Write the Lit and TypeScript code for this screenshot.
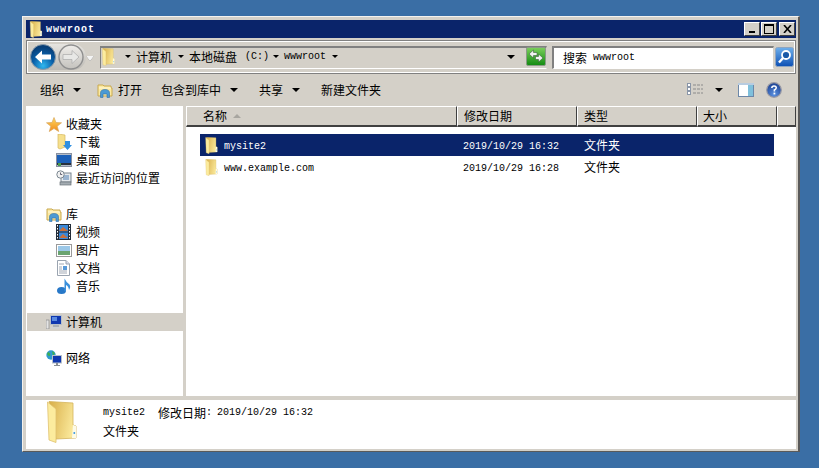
import { LitElement, html, css, svg } from "lit";
import { customElement } from "lit/decorators.js";

const folder = (w: number, h: number, id: string) => html`<svg class="ic" width=${w} height=${h} viewBox="0 0 30 42">
  <defs><linearGradient id=${id} x1="0" x2="1" y1="0" y2="0.3"><stop offset="0" stop-color="#d8ae48"/><stop offset="1" stop-color="#fae89a"/></linearGradient></defs>
  <path d="M2 0.5 L26 2 V24 L29 25 V37 L9 38 Z" fill=${`url(#${id})`} stroke="#d4b45c" stroke-width=".8"/>
  <path d="M26 24 L29 25 V37 L25 37 Z" fill="#fdfbe8"/><rect x="26.5" y="31" width="1.6" height="2" fill="#4aa0e0"/>
  <path d="M0.5 1 L9 8 V41.5 L2 39 Z" fill="#fcec9e" stroke="#dfc270" stroke-width=".8"/>
</svg>`;

const libFolder = () => html`<svg class="ic" width="16" height="15" viewBox="0 0 16 15">
  <path d="M1 2 H6 L7 3 H14 V5 H15 V13 H1 Z" fill="#fbe9a2" stroke="#c9a94e"/>
  <path d="M2 5 H14" stroke="#fff8d8"/>
  <path d="M3.5 14.5 V10 Q3.5 6.5 8 6.5 Q12.5 6.5 12.5 10 V14.5 H10 V11 H6 V14.5 Z" fill="#4b9ad4" stroke="#2f6fa8" stroke-width=".6"/>
</svg>`;

const arrow = (cls = "") => html`<span class="tri ${cls}"></span>`;

@customElement("app-root")
export class AppRoot extends LitElement {
  static styles = css`
    :host { display: block; width: 819px; height: 468px; background: #3a6ea5; box-sizing: border-box; padding: 16px 19px 16px 22px; overflow: hidden;
      font: 12px/18px "Noto Sans CJK SC", "Liberation Sans", sans-serif; color: #000; }
    .m { font-family: "Liberation Mono", monospace; font-size: 10px; }
    .ic { display: block; flex: none; }
    .win { width: 778px; height: 436px; box-sizing: border-box; background: #d4d0c8; border-top: 1px solid #f4f2ee; border-left: 1px solid #f4f2ee; border-right: 2px solid #5a5a5a; border-bottom: 1px solid #5a5a5a; padding: 3px 2px 2px 3px; display: flex; flex-direction: column; }
    .title { height: 18px; flex: none; background: #0a246a; color: #fff; display: flex; align-items: center; padding: 0 1px 0 3px; }
    .title .t { margin-left: 3px; padding-top: 2px; font: bold 10px/16px "Liberation Mono", monospace; letter-spacing: 1px; }
    .sp { flex: 1; }
    .wb { width: 16px; height: 14px; box-sizing: border-box; background: #d4d0c8; border: 1px solid; border-color: #fff #404040 #404040 #fff; display: flex; align-items: center; justify-content: center; margin-left: 1px; }
    .wb.x { margin-left: 2px; }
    .nav { margin-top: 2px; height: 34px; flex: none; box-sizing: border-box; border: 1px solid #808080; box-shadow: 0 0 0 1px #fff inset; display: flex; align-items: center; padding: 0 1px 0 3px; }
    .orb { width: 56px; height: 26px; flex: none; border-radius: 13px; background: linear-gradient(#e6e4e0, #bdbab4); display: flex; align-items: center; position: relative; }
    .drop { width: 0; height: 0; margin: 2px 8px 0 0; flex: none; border-left: 4px solid transparent; border-right: 4px solid transparent; border-top: 5px solid #f4f4f4; filter: drop-shadow(0 0 .6px #555); }
    .addr { width: 447px; height: 23px; flex: none; box-sizing: border-box; border: 1px solid; border-color: #808080 #d4d0c8 #fff #808080; border-top-width: 2px; padding-bottom: 2px; display: flex; align-items: center; margin-left: -2px; }
    .addr > * { flex: none; }
    .addr .fo { margin: 0 9px 0 0; }
    .tri { display: inline-block; width: 0; height: 0; border-left: 3px solid transparent; border-right: 3px solid transparent; border-top: 3px solid #000; flex: none; }
    .tri.big { border-left-width: 4px; border-right-width: 4px; border-top-width: 4px; }
    .a1 { margin-right: 5px; }
    .a2 { margin: 0 5px 0 6px; }
    .a3 { margin: 0 5px 0 4px; }
    .cd { margin-left: 8px; }
    .addr .big { margin-left: auto; margin-right: 11px; }
    .search { width: 222px; height: 23px; flex: none; box-sizing: border-box; margin-left: 5px; background: #fff; border: 1px solid; border-color: #808080 #d4d0c8 #fff #808080; border-top-width: 2px; border-left-width: 2px; display: flex; align-items: center; padding-left: 9px; gap: 6px; }
    .sbtn { margin-left: 1px; }
    .bar { height: 32px; flex: none; display: flex; align-items: center; padding-left: 14px; }
    .bar > * { flex: none; }
    .bar .tri { margin-left: 9px; }
    .g1 { margin-left: 16px; }
    .g2 { margin-left: 5px; }
    .g3 { margin-left: 19px; }
    .g4 { margin-left: 21px; }
    .g5 { margin-left: 21px; }
    .right { margin-left: auto; display: flex; align-items: center; padding-right: 14px; }
    .right > * { flex: none; }
    .bar .right .tri { margin: 0 15px 0 12px; }
    .hlp { margin-left: 12px; }
    .main { flex: 1; display: flex; min-height: 0; }
    .side { width: 157px; flex: none; background: #fff; padding-top: 9px; box-sizing: border-box; }
    .side .gr { margin-bottom: 18px; }
    .row { height: 18px; display: flex; align-items: center; padding-left: 20px; gap: 5px; }
    .row .box { width: 15px; display: flex; justify-content: center; flex: none; }
    .row.c { padding-left: 30px; }
    .row.sel { background: #d4d0c8; margin-left: 1px; padding-left: 19px; }
    .content { margin-left: 3px; flex: 1; background: #fff; display: flex; flex-direction: column; min-width: 0; }
    .head { height: 21px; flex: none; display: flex; box-sizing: border-box; }
    .hc { box-sizing: border-box; background: #d4d0c8; border: 1px solid; border-color: #fff #404040 #404040 #fff; border-bottom-width: 2px; line-height: 18px; padding-left: 16px; display: flex; align-items: center; }
    .hc.n { width: 271px; }
    .hc.d, .hc.ty { width: 120px; padding-left: 6px; }
    .hc.s { width: 80px; padding-left: 5px; }
    .hc.e { flex: 1; padding: 0; }
    .sort { width: 0; height: 0; margin-left: 6px; border-left: 4px solid transparent; border-right: 4px solid transparent; border-bottom: 4px solid #a8a6a0; }
    .list { padding: 7px 0 0 14px; }
    .fr { width: 574px; height: 22px; display: flex; align-items: center; }
    .fr.on { background: #0a246a; color: #fff; }
    .fr .fi { margin-left: 5px; }
    .fr .m { padding-top: 3px; }
    .fr .nm { width: 239px; margin-left: 6px; }
    .fr .dt { width: 121px; }
    .status { margin-top: 4px; height: 49px; flex: none; background: #fff; display: flex; align-items: flex-start; padding-left: 21px; }
    .status .fo { margin-top: 1px; }
    .status .tx { margin-left: 26px; padding-top: 4px; }
    .status .l { height: 18px; display: flex; align-items: center; }
    .mod { margin-left: 13px; }
    .dv { margin-left: 5px; }
  `;

  render() {
    return html`<div class="win">
      <div class="title">
        ${folder(14, 17, "g1")}
        <span class="t">wwwroot</span><span class="sp"></span>
        <span class="wb"><svg width="8" height="8"><rect x="1" y="6" width="6" height="2" fill="#000"/></svg></span>
        <span class="wb"><svg width="10" height="10"><rect x=".5" y="1" width="9" height="8.5" fill="none" stroke="#000"/><rect x="0" y="0" width="10" height="2" fill="#000"/></svg></span>
        <span class="wb x"><svg width="9" height="8"><path d="M1 0 L8 8 M8 0 L1 8" stroke="#000" stroke-width="1.6"/></svg></span>
      </div>
      <div class="nav">
        <div class="orb">
          <svg width="56" height="26" viewBox="0 0 56 26">
            <defs>
              <radialGradient id="bl" cx=".5" cy=".85" r=".75"><stop offset="0" stop-color="#2fb8f0"/><stop offset=".55" stop-color="#0a5fa8"/><stop offset="1" stop-color="#083f78"/></radialGradient>
              <linearGradient id="gr" x1="0" x2="0" y1="0" y2="1"><stop offset="0" stop-color="#efedea"/><stop offset="1" stop-color="#c4c2bd"/></linearGradient>
            </defs>
            <circle cx="13" cy="13" r="12.5" fill="url(#bl)" stroke="#8a9aa8"/>
            <path d="M5 13 L12 6.5 V10.5 H21 V15.5 H12 V19.5 Z" fill="#fff"/>
            <circle cx="41" cy="13" r="12" fill="url(#gr)" stroke="#8f8f8f" stroke-width="1.4"/>
            <path d="M49 13 L42 6.5 V10.5 H33 V15.5 H42 V19.5 Z" fill="#e8e8e6" stroke="#aaa" stroke-width=".7"/>
          </svg>
        </div>
        <span class="drop"></span>
        <div class="addr">
          <span class="fo">${folder(15, 18, "g2")}</span>
          ${arrow("a1")}<span>计算机</span>${arrow("a2")}<span>本地磁盘</span><span class="m cd">(C:)</span>${arrow("a3")}<span class="m">wwwroot</span>${arrow("a2")}
          ${arrow("big")}
          <svg class="ic" width="20" height="19" viewBox="0 0 20 19">
            <defs><linearGradient id="rf" x1="0" x2="0" y1="0" y2="1"><stop offset="0" stop-color="#7cd05c"/><stop offset="1" stop-color="#128a10"/></linearGradient></defs>
            <rect x=".5" y=".5" width="19" height="18" rx="1.5" fill="url(#rf)" stroke="#8a9a86"/>
            <path d="M3 7 L7.5 3 V5.5 H11 V8.5 H7.5 V11 Z M17 11 L12.5 15 V12.5 H9.5 V9.5 H12.5 V7 Z" fill="#f2f2f2" stroke="#2a4a2a" stroke-width=".5"/>
          </svg>
        </div>
        <div class="search"><span>搜索</span><span class="m">wwwroot</span></div>
        <svg class="ic sbtn" width="19" height="20" viewBox="0 0 19 20">
          <defs><linearGradient id="sb" x1="0" x2="0" y1="0" y2="1"><stop offset="0" stop-color="#6fb0ec"/><stop offset="1" stop-color="#0c4fb4"/></linearGradient></defs>
          <rect x=".5" y=".5" width="18" height="19" rx="2" fill="url(#sb)" stroke="#8fa5c0"/>
          <circle cx="11" cy="8" r="4" fill="#1a5aa8" stroke="#fff" stroke-width="1.8"/>
          <path d="M8 11 L4 15.5" stroke="#fff" stroke-width="2.4"/>
        </svg>
      </div>
      <div class="bar">
        <span>组织</span>${arrow("big")}
        <span class="g1">${libFolder()}</span><span class="g2">打开</span>
        <span class="g3">包含到库中</span>${arrow("big")}
        <span class="g4">共享</span>${arrow("big")}
        <span class="g5">新建文件夹</span>
        <div class="right">
          <svg class="ic" width="16" height="14" viewBox="0 0 16 14">
            ${[1, 5, 9].map((y) => svg`<rect x=".5" y=${y - 0.5} width="3" height="3" fill="#fff" stroke="#8a96a8"/><path d=${`M6 ${y + 1} H16`} stroke="#8a8a8a" stroke-dasharray="3 1"/>`)}
          </svg>
          ${arrow("big")}
          <svg class="ic" width="16" height="14" viewBox="0 0 16 14">
            <rect x=".5" y=".5" width="15" height="13" fill="#fff" stroke="#6c87a8"/><rect x="10" y="1" width="5" height="12" fill="#7fc0dc"/><rect x="0" y="0" width="16" height="2" fill="#b8cce0"/>
          </svg>
          <svg class="ic hlp" width="16" height="16" viewBox="0 0 16 16">
            <defs><radialGradient id="hp" cx=".5" cy=".8" r=".8"><stop offset="0" stop-color="#5a90e0"/><stop offset="1" stop-color="#1a3f90"/></radialGradient></defs>
            <circle cx="8" cy="8" r="7.3" fill="url(#hp)" stroke="#9a9aa4" stroke-width="1.2"/>
            <path d="M5.8 6 Q6 4 8 4 Q10.4 4 10.2 6 Q10 7.4 8.4 8 V9.5" fill="none" stroke="#fff" stroke-width="1.6"/><rect x="7.5" y="10.6" width="1.8" height="1.8" fill="#fff"/>
          </svg>
        </div>
      </div>
      <div class="main">
        <div class="side">
          <div class="gr">
            <div class="row"><span class="box"><svg class="ic" width="16" height="15" viewBox="0 0 16 15"><defs><linearGradient id="st" x1="0" x2="0" y1="0" y2="1"><stop offset="0" stop-color="#ffd95c"/><stop offset="1" stop-color="#f08a1c"/></linearGradient></defs><path d="M8 .5 L10 5.5 L15.5 5.8 L11.2 9.2 L12.7 14.5 L8 11.5 L3.3 14.5 L4.8 9.2 L.5 5.8 L6 5.5 Z" fill="url(#st)" stroke="#d9a860" stroke-width=".7"/></svg></span>收藏夹</div>
            <div class="row c"><span class="box"><svg class="ic" width="16" height="16" viewBox="0 0 16 16"><path d="M2 0 L9 1 V13 L4 15 L2 14 Z" fill="#f6e08e" stroke="#d6b860" stroke-width=".7"/><path d="M9 7 H14 V11 H16 L11.5 16 L7 11 H9 Z" fill="#2f8fe0"/></svg></span>下载</div>
            <div class="row c"><span class="box"><svg class="ic" width="16" height="14" viewBox="0 0 16 14"><rect x=".5" y=".5" width="15" height="13" fill="#b4bcc8" stroke="#8890a0"/><rect x="1" y="2" width="14" height="8" fill="#1c60b8"/><rect x="1" y="10" width="14" height="2" fill="#28303c"/><rect x="2" y="10" width="3" height="3" fill="#4a9a50"/></svg></span>桌面</div>
            <div class="row c"><span class="box"><svg class="ic" width="16" height="16" viewBox="0 0 16 16"><rect x="5" y="3" width="10" height="9" fill="#e4e8ec" stroke="#7a8690"/><rect x="7" y="5" width="6" height="5" fill="#9ab4d0"/><rect x="4" y="12" width="11" height="3" fill="#a4acb2" stroke="#6a7278" stroke-width=".7"/><circle cx="4.5" cy="4.5" r="3.7" fill="#f0f0f0" stroke="#7a8690"/><path d="M4.5 2.5 V4.5 H6.2" fill="none" stroke="#445" stroke-width=".8"/></svg></span>最近访问的位置</div>
          </div>
          <div class="gr">
            <div class="row"><span class="box">${libFolder()}</span>库</div>
            <div class="row c"><span class="box"><svg class="ic" width="15" height="16" viewBox="0 0 15 16"><rect width="15" height="16" fill="#222c38"/><rect x="3" y="1" width="9" height="6.5" fill="#3a88d8"/><rect x="3" y="8.5" width="9" height="6.5" fill="#3a88d8"/><path d="M3 7 L7 3 L12 7 Z M3 14 L7 10 L12 14 Z" fill="#c8703c"/>${[1, 4, 7, 10, 13].map((y) => svg`<rect x="1" y=${y} width="1" height="1.5" fill="#fff"/><rect x="13" y=${y} width="1" height="1.5" fill="#fff"/>`)}</svg></span>视频</div>
            <div class="row c"><span class="box"><svg class="ic" width="16" height="13" viewBox="0 0 16 13"><rect x=".5" y=".5" width="15" height="12" fill="#fff" stroke="#9a9a9a"/><rect x="2" y="2" width="12" height="5" fill="#9cc8e8"/><rect x="2" y="7" width="12" height="4" fill="#6aa470"/></svg></span>图片</div>
            <div class="row c"><span class="box"><svg class="ic" width="13" height="16" viewBox="0 0 13 16"><path d="M.5 .5 H9 L12.5 4 V15.5 H.5 Z" fill="#fff" stroke="#9aa4b0"/><path d="M9 .5 V4 H12.5" fill="#dde" stroke="#9aa4b0"/><path d="M2 4 H7 M2 7 H5 M2 9 H5 M2 11 H10 M2 13 H10" stroke="#a0a8b4"/><rect x="6" y="6" width="4" height="4" fill="#5a9ad8"/></svg></span>文档</div>
            <div class="row c"><span class="box"><svg class="ic" width="14" height="16" viewBox="0 0 14 16"><ellipse cx="4.5" cy="12.5" rx="4.5" ry="3.5" fill="#2878c8"/><path d="M7.5 13 V0.5 Q9 4 12.5 6.5 Q14 9 12 12 Q11.5 8 9 7 V13 Z" fill="#3a90dc"/></svg></span>音乐</div>
          </div>
          <div class="gr">
            <div class="row sel"><span class="box"><svg class="ic" width="16" height="14" viewBox="0 0 16 14"><rect x="0" y="5" width="3" height="9" fill="#e4e4e4" stroke="#888" stroke-width=".7"/><rect x="4.5" y=".5" width="11" height="9" fill="#1038b0" stroke="#b8c0c8"/><rect x="6" y="2" width="5" height="4" fill="#5a8ae0"/><rect x="7" y="10" width="6" height="2" fill="#aab0b6"/><rect x="5" y="12" width="10" height="1.5" fill="#cfd3d6"/></svg></span>计算机</div>
          </div>
          <div class="gr">
            <div class="row"><span class="box"><svg class="ic" width="16" height="16" viewBox="0 0 16 16"><circle cx="5" cy="5" r="4.7" fill="#2f9ad0"/><path d="M2 2 Q5 3 4 6 Q1.5 6 1 4 Z M6 1 L9 3 L7 6 Z" fill="#3db050"/><rect x="6.5" y="5.5" width="9" height="7.5" fill="#1038b0" stroke="#b8c0c8"/><rect x="10" y="13" width="2" height="2" fill="#8a8f94"/><rect x="8" y="15" width="6" height="1" fill="#8a8f94"/></svg></span>网络</div>
          </div>
        </div>
        <div class="content">
          <div class="head">
            <div class="hc n">名称<span class="sort"></span></div>
            <div class="hc d">修改日期</div>
            <div class="hc ty">类型</div>
            <div class="hc s">大小</div>
            <div class="hc e"></div>
          </div>
          <div class="list">
            <div class="fr on"><span class="fi">${folder(13, 17, "g3")}</span><span class="nm m">mysite2</span><span class="dt m">2019/10/29 16:32</span><span>文件夹</span></div>
            <div class="fr"><span class="fi">${folder(13, 17, "g4")}</span><span class="nm m">www.example.com</span><span class="dt m">2019/10/29 16:28</span><span>文件夹</span></div>
          </div>
        </div>
      </div>
      <div class="status">
        <span class="fo">${folder(30, 42, "g5")}</span>
        <div class="tx">
          <div class="l"><span class="m">mysite2</span><span class="mod">修改日期</span><span class="m">:</span><span class="m dv">2019/10/29 16:32</span></div>
          <div class="l">文件夹</div>
        </div>
      </div>
    </div>`;
  }
}
